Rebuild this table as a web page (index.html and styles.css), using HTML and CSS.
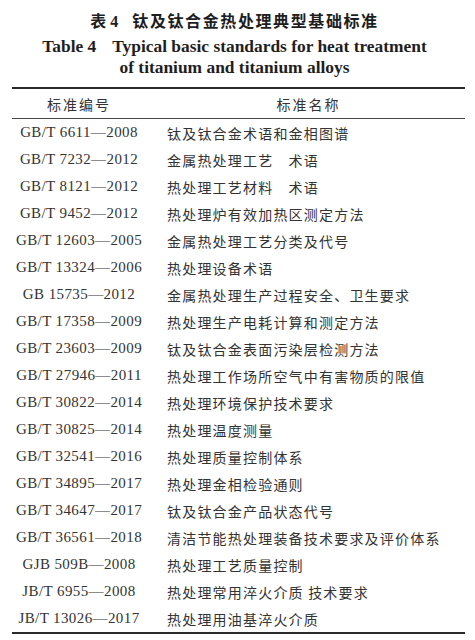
FILE: index.html
```html
<!DOCTYPE html>
<html lang="zh-CN">
<head>
<meta charset="utf-8">
<link rel="stylesheet" href="styles.css">
</head>
<body>
<div class="page">
  <div class="caption">
    <div class="cap-zh"><span class="num">表 4</span>钛及钛合金热处理典型基础标准</div>
    <div class="cap-en"><span class="num-en">Table 4</span>Typical basic standards for heat treatment<br>of titanium and titanium alloys</div>
  </div>
  <table class="std">
    <thead>
      <tr><th class="c1">标准编号</th><th class="c2">标准名称</th></tr>
    </thead>
    <tbody>
      <tr><td class="c1">GB/T 6611—2008</td><td class="c2">钛及钛合金术语和金相图谱</td></tr>
      <tr><td class="c1">GB/T 7232—2012</td><td class="c2">金属热处理工艺　术语</td></tr>
      <tr><td class="c1">GB/T 8121—2012</td><td class="c2">热处理工艺材料　术语</td></tr>
      <tr><td class="c1">GB/T 9452—2012</td><td class="c2">热处理炉有效加热区测定方法</td></tr>
      <tr><td class="c1">GB/T 12603—2005</td><td class="c2">金属热处理工艺分类及代号</td></tr>
      <tr><td class="c1">GB/T 13324—2006</td><td class="c2">热处理设备术语</td></tr>
      <tr><td class="c1">GB 15735—2012</td><td class="c2">金属热处理生产过程安全、卫生要求</td></tr>
      <tr><td class="c1">GB/T 17358—2009</td><td class="c2">热处理生产电耗计算和测定方法</td></tr>
      <tr><td class="c1">GB/T 23603—2009</td><td class="c2">钛及钛合金表面污染层检测方法</td></tr>
      <tr><td class="c1">GB/T 27946—2011</td><td class="c2">热处理工作场所空气中有害物质的限值</td></tr>
      <tr><td class="c1">GB/T 30822—2014</td><td class="c2">热处理环境保护技术要求</td></tr>
      <tr><td class="c1">GB/T 30825—2014</td><td class="c2">热处理温度测量</td></tr>
      <tr><td class="c1">GB/T 32541—2016</td><td class="c2">热处理质量控制体系</td></tr>
      <tr><td class="c1">GB/T 34895—2017</td><td class="c2">热处理金相检验通则</td></tr>
      <tr><td class="c1">GB/T 34647—2017</td><td class="c2">钛及钛合金产品状态代号</td></tr>
      <tr><td class="c1">GB/T 36561—2018</td><td class="c2">清洁节能热处理装备技术要求及评价体系</td></tr>
      <tr><td class="c1">GJB 509B—2008</td><td class="c2">热处理工艺质量控制</td></tr>
      <tr><td class="c1">JB/T 6955—2008</td><td class="c2">热处理常用淬火介质 技术要求</td></tr>
      <tr><td class="c1">JB/T 13026—2017</td><td class="c2">热处理用油基淬火介质</td></tr>
    </tbody>
  </table>
</div>
</body>
</html>
```

FILE: styles.css
```css
html, body {
  margin: 0;
  padding: 0;
  background: #ffffff;
}
.page {
  width: 475px;
  padding: 10px 10px 0 12px;
  box-sizing: border-box;
  font-family: "Liberation Serif", "Noto Sans CJK SC", serif;
  color: #333333;
}
.caption {
  text-align: center;
  color: #1e1e1e;
  font-weight: bold;
  padding-right: 8px;
}
.cap-zh {
  font-size: 16px;
  line-height: 24px;
  letter-spacing: 1.6px;
}
.cap-zh .num {
  margin-right: 14px;
  letter-spacing: 0;
}
.cap-en {
  margin-top: 2px;
  font-size: 17.4px;
  line-height: 21px;
}
.cap-en .num-en {
  margin-right: 16px;
}
.std {
  margin-top: 9px;
  width: 453px;
  border-collapse: collapse;
  table-layout: fixed;
  border-top: 2px solid #2a2a2a;
  border-bottom: 2px solid #2a2a2a;
}
.std th {
  font-weight: normal;
  height: 29px;
  padding: 0;
  font-size: 14px;
  letter-spacing: 2px;
  border-bottom: 1px solid #444444;
  font-family: "Noto Sans CJK SC", sans-serif;
}
.std td {
  height: 27px;
  padding: 0;
  font-size: 14px;
  white-space: nowrap;
}
.std .c1 {
  width: 134px;
  text-align: center;
}
td.c1 {
  font-size: 15px;
  letter-spacing: 0.4px;
}
th.c2 {
  text-align: center;
  padding-left: 6px;
}
td.c2 {
  text-align: left;
  padding-left: 21px;
  letter-spacing: 1.2px;
  font-family: "Noto Sans CJK SC", sans-serif;
  color: #333333;
}
```
